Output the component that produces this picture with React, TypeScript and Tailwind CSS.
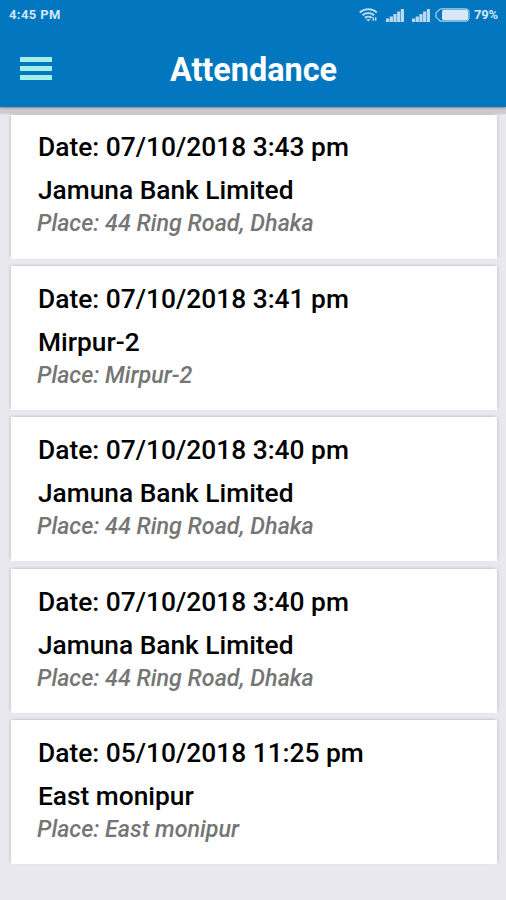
const items = [
  { date: '07/10/2018 3:43 pm', name: 'Jamuna Bank Limited', place: '44 Ring Road, Dhaka' },
  { date: '07/10/2018 3:41 pm', name: 'Mirpur-2', place: 'Mirpur-2' },
  { date: '07/10/2018 3:40 pm', name: 'Jamuna Bank Limited', place: '44 Ring Road, Dhaka' },
  { date: '07/10/2018 3:40 pm', name: 'Jamuna Bank Limited', place: '44 Ring Road, Dhaka' },
  { date: '05/10/2018 11:25 pm', name: 'East monipur', place: 'East monipur' },
];

function Wifi() {
  return (
    <svg className="h-[14px] w-[19px]" viewBox="0 0 19 14" fill="none" stroke="#b9daf2" strokeWidth="2.1">
      <path d="M.8 4.6C5.5.1 13.1.1 17.8 4.6" />
      <path d="M3.4 7.3c3.3-3 8.5-3 11.8 0" />
      <path d="M5.9 9.9c1.9-1.6 4.9-1.6 6.8 0" />
      <path d="M7 11.2h4.6L9.3 13.6z" fill="#b9daf2" stroke="none" />
      <path d="M14.3 12.8V9.3M16.7 9.3v3.5" strokeWidth="1.5" />
    </svg>
  );
}

function Signal() {
  return (
    <svg className="h-[13px] w-[18px]" viewBox="0 0 18 13" fill="#b9daf2">
      <rect x="0" y="9.5" width="3.2" height="3.5" />
      <rect x="3.7" y="7.5" width="3.2" height="5.5" />
      <rect x="7.4" y="5" width="3.2" height="8" />
      <rect x="11.1" y="2.5" width="3.2" height="10.5" />
      <rect x="14.8" y="0" width="3.2" height="13" />
    </svg>
  );
}

function Battery() {
  return (
    <svg className="h-[14px] w-[35px]" viewBox="0 0 35 14" fill="none">
      <path d="M6 .8h24.500a3.500 3.500 0 0 1 3.500 3.500v5.400a3.500 3.500 0 0 1-3.500 3.500H6C4 13.200 3.500 10 1 9.500v-5C3.500 4 4 .8 6 .8z" stroke="#a6d0ee" strokeWidth="1.2" />
      <rect x="7" y="1.8" width="26" height="10.4" rx="2" fill="#d5e7f8" />
    </svg>
  );
}

export default function App() {
  return (
    <div className="flex h-[900px] w-[506px] flex-col overflow-hidden bg-[#e9e8ef] font-[Roboto,sans-serif]">
      <header className="relative h-[107px] shrink-0 bg-[#0277bf] shadow-[0_1px_2px_#0005]">
        <div className="flex h-[30px] items-center pr-2 pl-[9px] text-[13px] font-bold text-[#d3e6f8]">
          <span className="flex-1 tracking-[0.4px]">4:45 PM</span>
          <Wifi />
          <span className="ml-[8px] flex"><Signal /></span>
          <span className="ml-[8px] flex"><Signal /></span>
          <span className="mr-[4px] ml-[5px] flex"><Battery /></span>
          <span className="w-[24px] tracking-[-0.2px]">79%</span>
        </div>
        <div className="flex h-[77px] items-center pl-5">
          <div className="flex w-8 flex-col gap-1">
            <i className="h-[5px] bg-[#a5efe9]" />
            <i className="h-[5px] bg-[#a5efe9]" />
            <i className="h-[5px] bg-[#a5efe9]" />
          </div>
          <h1 className="flex-1 pt-[3px] pr-[51px] text-center text-[32.4px] font-bold text-white">Attendance</h1>
        </div>
      </header>
      <main className="flex flex-col gap-[7.45px] bg-[linear-gradient(#cbcad0_0,#cbcad0_6px,transparent_8px)] px-[10px] pt-[7.5px]">
        {items.map((it) => (
          <section key={it.date + it.name} className="mr-[-1px] ml-[0.5px] h-[144px] shrink-0 bg-white pt-[14.7px] pl-[27.5px] shadow-[-2px_-1px_3px_-1px_#00000024,2px_-1px_3px_-1px_#00000024]">
            <p className="text-[26.35px] leading-[36px] font-medium">Date: {it.date}</p>
            <p className="mt-[7px] text-[26.3px] leading-[36px] font-medium">{it.name}</p>
            <p className="-ml-px text-[23.3px] leading-[30px] font-medium text-[#757575] italic">Place: {it.place}</p>
          </section>
        ))}
      </main>
    </div>
  );
}
